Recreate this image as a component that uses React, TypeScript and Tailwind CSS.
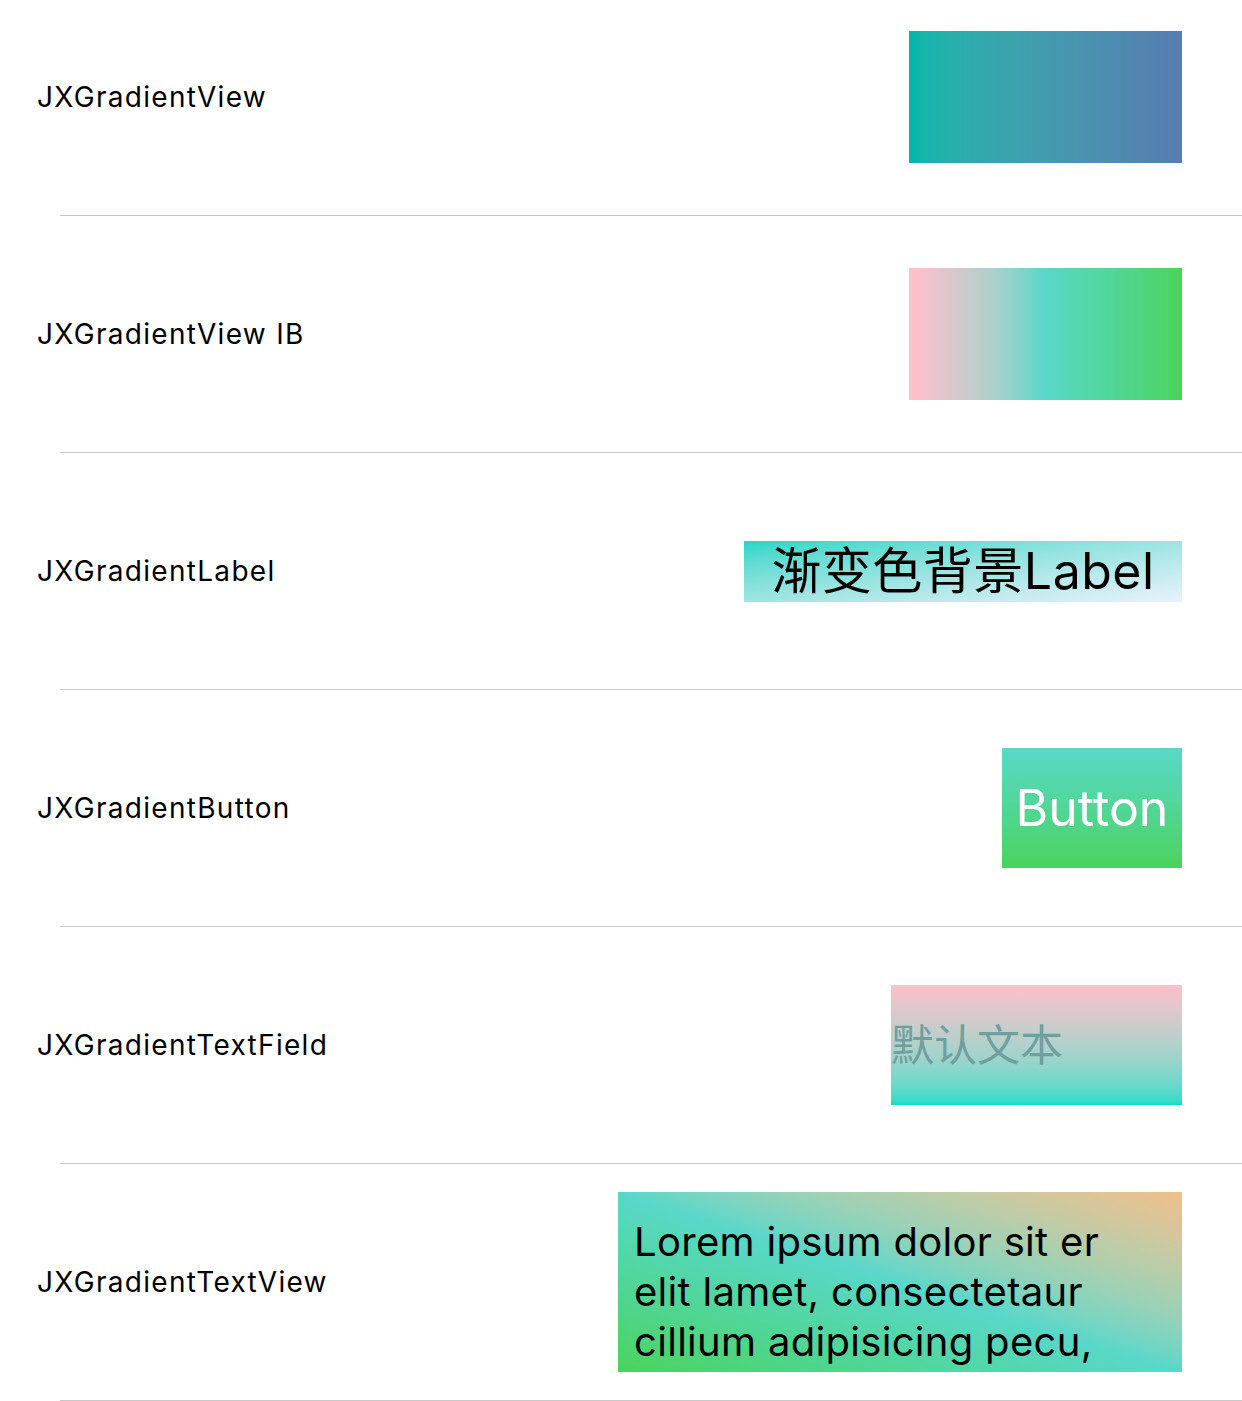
export default function App() {
  const rows: { title: string; demo: React.ReactNode }[] = [
    {
      title: "JXGradientView",
      demo: <div className="w-[273px] h-[132px] bg-linear-to-r from-[#00b8aa] to-[#577cb1]" />,
    },
    {
      title: "JXGradientView IB",
      demo: (
        <div className="w-[273px] h-[132px] bg-linear-to-r from-[#fbc0cc] from-3% via-[#59d7c9] via-49% to-[#4bd459]" />
      ),
    },
    {
      title: "JXGradientLabel",
      demo: (
        <div className="w-[438px] h-[61px] flex items-center justify-center bg-linear-to-br from-[#17d6c8] to-[#e8f1fc] text-[50px] tracking-[0.5px] leading-none text-black font-['Inter','Noto_Sans_CJK_SC',sans-serif]">
          渐变色背景Label
        </div>
      ),
    },
    {
      title: "JXGradientButton",
      demo: (
        <div className="w-[180px] h-[120px] flex items-center justify-center bg-linear-to-b from-[#59d8c8] to-[#4bd35a] text-[50px] text-white">
          Button
        </div>
      ),
    },
    {
      title: "JXGradientTextField",
      demo: (
        <div className="w-[291px] h-[120px] flex items-center bg-linear-to-b from-[#fbc0cb] to-[#17dccb] text-[43px] text-[#70a09d] font-['Inter','Noto_Sans_CJK_SC',sans-serif]">
          默认文本
        </div>
      ),
    },
    {
      title: "JXGradientTextView",
      demo: (
        <div className="w-[564px] h-[180px] overflow-hidden px-4 pt-[25px] bg-linear-to-tr from-[#4bd35a] via-[#59d7c9] to-[#f0bf8b] text-[40px] tracking-[0.3px] leading-[50px] text-black">
          Lorem ipsum dolor sit er
          <br />
          elit lamet, consectetaur
          <br />
          cillium adipisicing pecu,
        </div>
      ),
    },
  ];

  return (
    <div className="h-[1401px] overflow-hidden bg-white font-['Inter',sans-serif]">
      <div className="-mt-[21px]">
        {rows.map((row) => (
          <div key={row.title}>
            <div className="h-[236px] flex items-center justify-between pl-[37px] pr-[60px]">
              <span className="text-[28px] tracking-[1.3px] text-black">{row.title}</span>
              {row.demo}
            </div>
            <div className="ml-[60px] h-px bg-[#c8c7cc]" />
          </div>
        ))}
      </div>
    </div>
  );
}
